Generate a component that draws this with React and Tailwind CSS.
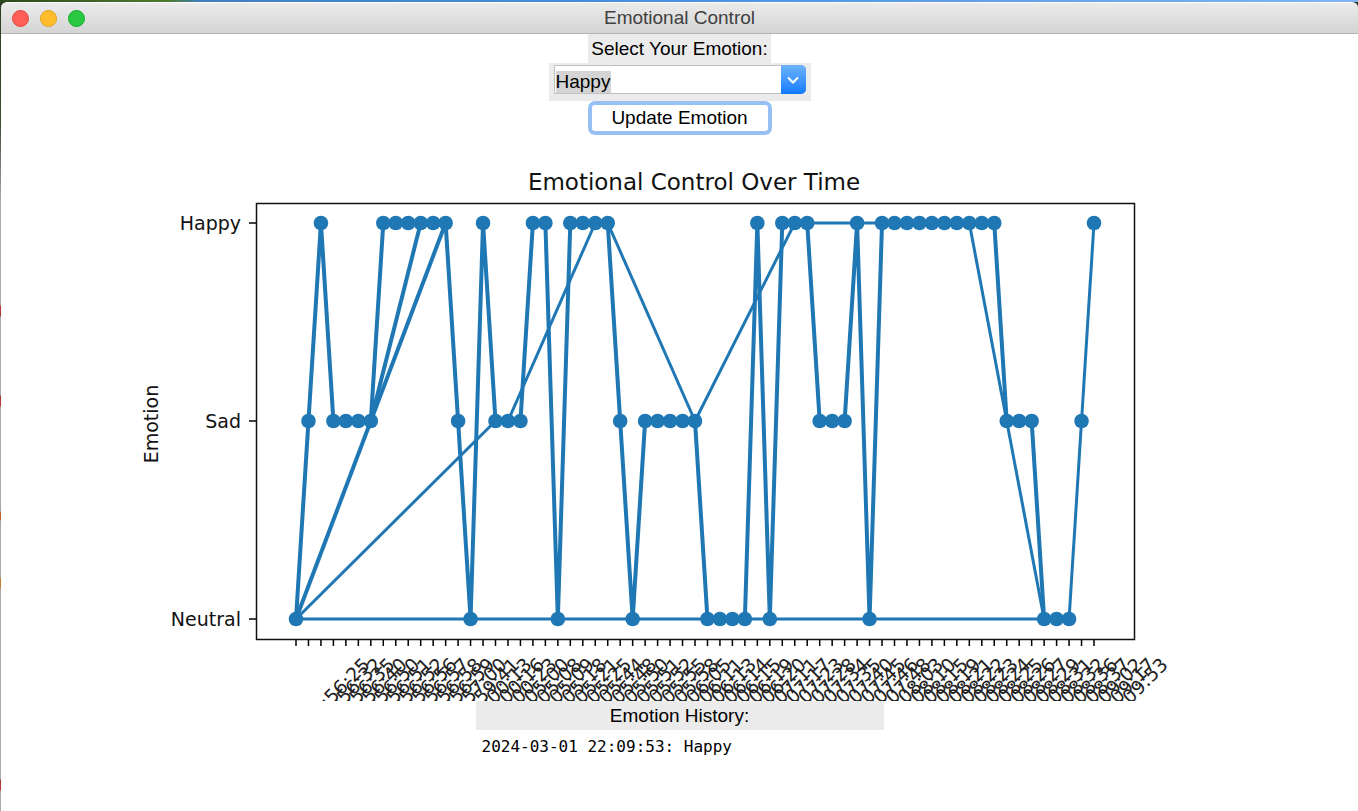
import { useState } from "react";

const LEVELS = { Happy: 88, Sad: 286, Neutral: 484 };

// Runs of consecutive readings: [emotion, number of readings]
const RUNS = [
  ["Neutral", 1], ["Sad", 1], ["Happy", 1], ["Sad", 4], ["Happy", 6], ["Sad", 1],
  ["Neutral", 1], ["Happy", 1], ["Sad", 3], ["Happy", 2], ["Neutral", 1], ["Happy", 4],
  ["Sad", 1], ["Neutral", 1], ["Sad", 5], ["Neutral", 4], ["Happy", 1], ["Neutral", 1],
  ["Happy", 3], ["Sad", 3], ["Happy", 1], ["Neutral", 1], ["Happy", 10], ["Sad", 3],
  ["Neutral", 3], ["Sad", 1], ["Happy", 1],
];

const TIMES = (
  "21:56:25 21:56:32 21:56:35 21:56:40 21:56:50 21:56:51 21:56:52 21:56:56 21:56:57 21:56:58 " +
  "21:56:59 21:57:00 21:59:41 22:00:13 22:00:16 22:00:23 22:05:00 22:05:08 22:05:09 22:05:18 " +
  "22:05:21 22:05:25 22:05:44 22:05:48 22:05:50 22:05:51 22:05:52 22:05:55 22:05:58 22:06:05 " +
  "22:06:11 22:06:13 22:06:14 22:06:15 22:06:19 22:06:20 22:07:11 22:07:17 22:07:23 22:07:28 " +
  "22:07:34 22:07:35 22:07:40 22:07:45 22:07:46 22:07:48 22:08:03 22:08:10 22:08:15 22:08:19 " +
  "22:08:21 22:08:22 22:08:23 22:08:24 22:08:25 22:08:26 22:08:27 22:08:29 22:08:31 22:08:32 " +
  "22:08:36 22:08:37 22:09:02 22:09:17 22:09:53"
).split(" ");

const JUMPS = [[0, 12], [6, 10], [0, 16], [0, 60], [17, 24], [25, 32], [32, 40], [41, 47], [54, 60]];

const POINTS = RUNS.flatMap(([emotion, count]) => Array(count).fill(emotion)).map((emotion, i) => ({
  x: 182 + (i * 798) / 64,
  y: LEVELS[emotion],
}));

const toPoints = (list) => list.map((p) => `${p.x},${p.y}`).join(" ");

function EmotionChart() {
  return (
    <svg viewBox="-1 0 1133 566" className="block w-full max-w-[1133px]" role="img" aria-label="Emotional Control Over Time" fontFamily='"DejaVu Sans", sans-serif'>
      <text x="580" y="55" textAnchor="middle" fontSize="23" fill="#111">Emotional Control Over Time</text>
      <text transform="translate(44 289) rotate(-90)" textAnchor="middle" fontSize="19" fill="#111">Emotion</text>
      <g stroke="#1f77b4" fill="none" strokeLinejoin="round">
        <polyline points={toPoints(POINTS.slice(0, 63))} strokeWidth="4" />
        <polyline points={toPoints(POINTS.slice(62))} strokeWidth="3" />
        {JUMPS.map(([a, b], i) => (
          <line key={i} x1={POINTS[a].x} y1={POINTS[a].y} x2={POINTS[b].x} y2={POINTS[b].y} strokeWidth={i < 2 ? 4 : 3} />
        ))}
      </g>
      <g fill="#1f77b4">
        {POINTS.map((p, i) => (
          <circle key={i} cx={p.x} cy={p.y} r="7.3" />
        ))}
      </g>
      <rect x="142.5" y="68.5" width="878" height="436" fill="none" stroke="#111" strokeWidth="1.5" />
      {Object.entries(LEVELS).map(([name, y]) => (
        <g key={name}>
          <line x1="135" x2="142" y1={y} y2={y} stroke="#000" strokeWidth="1.5" />
          <text x="127" y={y + 7} textAnchor="end" fontSize="19" fill="#111">{name}</text>
        </g>
      ))}
      {POINTS.map((p, i) => (
        <g key={i}>
          <line x1={p.x} x2={p.x} y1="505" y2="511" stroke="#000" strokeWidth="1.5" />
          <text transform={`translate(${p.x + 75} 531) rotate(-45)`} textAnchor="end" fontSize="19" fill="#222">
            {`2024-03-01 ${TIMES[i]}`}
          </text>
        </g>
      ))}
    </svg>
  );
}

function TitleBar() {
  return (
    <header className="flex h-8 items-center rounded-t-md border-t border-b border-t-white border-b-[#b4b4b4] bg-linear-to-b from-[#ebebeb] to-[#d4d4d4] px-[11px]">
      <div className="flex flex-1 gap-[11px]">
        <button aria-label="Close" className="size-[17px] rounded-full border border-[#e2463f] bg-[#ff5f57]" />
        <button aria-label="Minimize" className="size-[17px] rounded-full border border-[#e1a116] bg-[#ffbd2e]" />
        <button aria-label="Zoom" className="size-[17px] rounded-full border border-[#12ac28] bg-[#28c940]" />
      </div>
      <h1 className="text-[19px] leading-6 text-[#404040]">Emotional Control</h1>
      <div className="flex-1" />
    </header>
  );
}

export default function App() {
  const [emotion, setEmotion] = useState("Happy");
  const [history, setHistory] = useState("2024-03-01 22:09:53: Happy");

  return (
    <div className="flex min-h-screen flex-col bg-[linear-gradient(to_right,#2c4a1a_0,#4c7a30_170px,#3f7fc0_200px,#4a90e2_50%,#7fb4f0)] pt-0.5 font-['Liberation_Sans',Arial,sans-serif] text-black">
      <div className="flex flex-1 flex-col bg-[linear-gradient(#2c3b22_0,#3a4a35_120px,#a9a9a9_200px,#a9a9a9_303px,#b8363a_304px,#b8363a_314px,#a9a9a9_315px,#a9a9a9_393px,#b8363a_394px,#b8363a_404px,#a9a9a9_405px,#a9a9a9_509px,#c0652f_510px,#c0652f_518px,#a9a9a9_519px,#a9a9a9_575px,#c5813a_576px,#c5813a_586px,#a9a9a9_587px,#a9a9a9_777px,#b8363a_778px,#b8363a_788px,#a9a9a9_789px)] pl-px">
        <div className="flex flex-1 flex-col">
          <TitleBar />
          <main className="flex flex-1 flex-col items-center bg-white">
            <label htmlFor="emotion" className="bg-[#ebebeb] px-[3px] pt-px text-[19px] leading-7">Select Your Emotion:</label>
            <div className="bg-[#ebebeb] px-[5px] pt-0.5 pb-[7px]">
              <div className="relative flex">
                <select
                  id="emotion"
                  value={emotion}
                  onChange={(e) => setEmotion(e.target.value)}
                  className="h-[29px] w-[252px] appearance-none rounded-r-[5px] border border-[#c0c0c0] bg-white bg-[linear-gradient(#d4d4d4,#d4d4d4)] bg-[length:55px_22px] bg-[position:1px_5px] bg-no-repeat pt-[5px] pl-px text-[19px] leading-[22px] outline-none"
                >
                  <option>Happy</option>
                  <option>Sad</option>
                  <option>Neutral</option>
                </select>
                <span className="pointer-events-none absolute inset-y-0 right-0 flex w-[25px] items-center justify-center rounded-r-[5px] bg-linear-to-b from-[#6bb3fa] to-[#0a7aff]">
                  <svg width="12" height="8" viewBox="0 0 12 8" fill="none" stroke="white" strokeWidth="2" aria-hidden="true">
                    <path d="M1 1.5 6 6.5 11 1.5" />
                  </svg>
                </span>
              </div>
            </div>
            <button
              onClick={() => setHistory(`2024-03-01 22:09:53: ${emotion}`)}
              className="h-[34px] w-[184px] rounded-[7px] border-4 border-[#97c1f5] bg-white text-[19px] leading-6"
            >
              Update Emotion
            </button>
            <EmotionChart />
            <label htmlFor="history" className="w-[408px] bg-[#ebebeb] pt-px text-center text-[19px] leading-7">Emotion History:</label>
            <textarea
              id="history"
              readOnly
              rows={3}
              value={history}
              className="w-[408px] resize-none bg-white px-1.5 py-[5px] font-['DejaVu_Sans_Mono',Menlo,monospace] text-[16px] leading-6 outline-none"
            />
          </main>
        </div>
      </div>
    </div>
  );
}
